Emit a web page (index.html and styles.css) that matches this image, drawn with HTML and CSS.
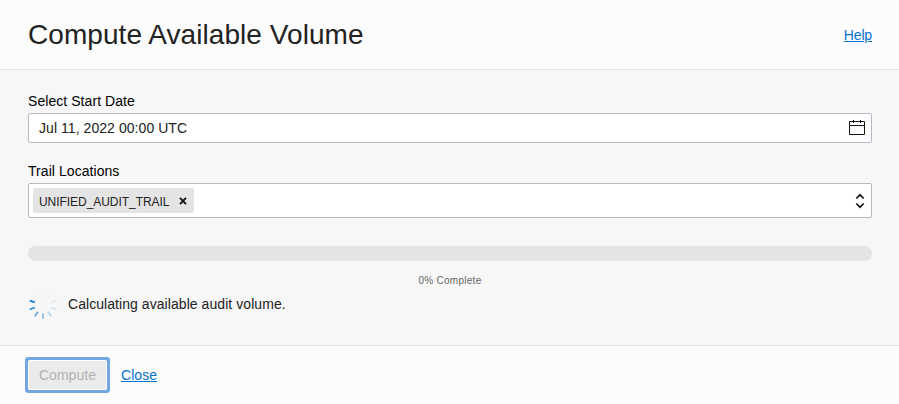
FILE: index.html
```html
<!DOCTYPE html>
<html lang="en">
<head>
<meta charset="utf-8">
<title>Compute Available Volume</title>
<link rel="stylesheet" href="styles.css">
</head>
<body>
<div class="dialog">
  <header class="header">
    <h1 class="title">Compute Available Volume</h1>
    <a class="link help" href="#">Help</a>
  </header>
  <main class="content">
    <div class="label">Select Start Date</div>
    <div class="field date">
      <span>Jul 11, 2022 00:00 UTC</span>
      <svg class="calendar" width="16" height="16" viewBox="0 0 16 16" fill="none" stroke="#161513"><path d="M.5 1.500h15v13H.5zM.5 5.500h15M4.500 0v3M11.500 0v3"/></svg>
    </div>
    <div class="label second">Trail Locations</div>
    <div class="field combo">
      <span class="chip"><span class="chip-text">UNIFIED_AUDIT_TRAIL</span>
        <svg width="8" height="8" viewBox="0 0 8 8" fill="none" stroke="#161513" stroke-width="1.9"><path d="M1 .8l6 6.4M7 .8L1 7.200"/></svg>
      </span>
      <svg class="arrows" width="10" height="16" viewBox="0 0 10 16" fill="none" stroke="#161513" stroke-width="1.700"><path d="M1.300 5.500L5 1.800l3.700 3.700M1.300 10.500L5 14.200l3.700-3.700"/></svg>
    </div>
    <div class="progress"></div>
    <div class="percent">0% Complete</div>
    <div class="status">
      <svg class="spinner" width="30" height="30" viewBox="-15 -15 30 30" stroke="#0572ce" stroke-width="1.800">
        <path d="M0 8.500V14" opacity=".4"/>
        <path d="M0 8.500V14" opacity=".55" transform="rotate(36)"/>
        <path d="M0 8.500V14" opacity=".75" transform="rotate(72)"/>
        <path d="M0 8.500V14" opacity=".9" transform="rotate(108)"/>
        <path d="M0 8.500V14" opacity=".01" transform="rotate(144)"/>
        <path d="M0 8.500V14" opacity=".01" transform="rotate(180)"/>
        <path d="M0 8.500V14" opacity=".02" transform="rotate(216)"/>
        <path d="M0 8.500V14" opacity=".07" transform="rotate(252)"/>
        <path d="M0 8.500V14" opacity=".15" transform="rotate(288)"/>
        <path d="M0 8.500V14" opacity=".25" transform="rotate(324)"/>
      </svg>
      <span>Calculating available audit volume.</span>
    </div>
  </main>
  <footer class="footer">
    <button class="compute">Compute</button>
    <a class="link" href="#">Close</a>
  </footer>
</div>
</body>
</html>
```
FILE: styles.css
```css
* { box-sizing: border-box; }
body { margin: 0; font: 14px/18px "Liberation Sans", Arial, sans-serif; color: #222; letter-spacing: .06px; }
.dialog { height: 404px; display: flex; flex-direction: column; background: #fcfcfc; }
.header { height: 70px; padding: 0 27px 0 28px; display: flex; align-items: center; justify-content: space-between; border-bottom: 1px solid #e4e4e4; }
.title { margin: 0; font-size: 28px; line-height: 34px; font-weight: 400; }
.link { color: #0572ce; text-decoration: underline; }
.help { letter-spacing: -.15px; }
.content { height: 275px; padding: 22px 27px 0 28px; background: #f7f7f7; }
.label { height: 18px; color: #000; }
.field { display: flex; align-items: center; justify-content: space-between; background: #fff; border: 1px solid #b4b9c3; border-radius: 2px; }
.date { height: 30px; margin-top: 3px; padding: 0 6px 0 10px; }
.second { margin-top: 19px; }
.combo { height: 35px; margin-top: 3px; padding: 0 6px 0 4px; }
.chip { width: 161px; height: 25px; padding: 0 7px 0 6px; display: flex; align-items: center; justify-content: space-between; background: #e4e4e4; border-radius: 2px; font-size: 12px; letter-spacing: -.05px; }
.chip-text { padding-top: 2px; }
.progress { height: 15px; margin-top: 28px; background: #e4e4e4; border-radius: 8px; }
.percent { margin-top: 13px; font-size: 10px; line-height: 14px; text-align: center; color: #666; letter-spacing: .27px; }
.status { height: 30px; margin-top: 2px; display: flex; align-items: center; gap: 10px; }
.status span { padding-bottom: 2px; }
.footer { height: 59px; padding: 0 29px; display: flex; align-items: center; gap: 15px; border-top: 1px solid #e4e4e4; }
.compute { width: 77px; height: 28px; padding: 0; border: 0; border-radius: 1px; background: #ebebeb; color: #b1b1b1; font: inherit; letter-spacing: .06px; box-shadow: 0 0 0 1px #fff, 0 0 0 4px #74a6e1; }
```
